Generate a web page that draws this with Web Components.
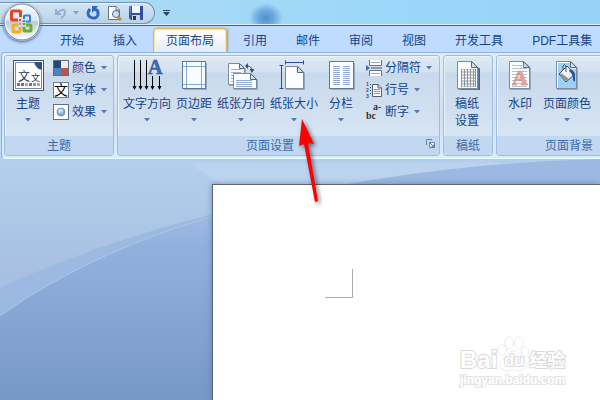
<!DOCTYPE html>
<html lang="zh-CN">
<head>
<meta charset="utf-8">
<title>页面布局</title>
<style>
html,body{margin:0;height:100%}
body{font:12px/16px "Liberation Sans","Noto Sans CJK SC",sans-serif;color:#15428b;overflow:hidden}
</style>
</head>
<body>
<word-window></word-window>
<script>
const PAGE = (x, y, w, h, f) => `<path d="M${x+1} ${y+1}h${w-f}l${f} ${f}v${h-f}h-${w}z" fill="#6d87ad" opacity=".6"/><path d="M${x+.5} ${y+.5}h${w-f-1}l${f} ${f}v${h-f-1}h-${w-1}z" fill="#fcfdff" stroke="#7d8ba1"/><path d="M${x+w-f-.5} ${y+.5}v${f}h${f}z" fill="#d5e1f0" stroke="#52668a"/>`;
const lines = (x1, x2, y1, y2, step, c) => { let d = ''; for (let y = y1; y <= y2; y += step) d += `M${x1} ${y}.5H${x2}`; return `<path d="${d}" stroke="${c}" fill="none"/>`; };
const ICONS = {
  theme: [32, 32, `<rect x="1.500" y=".5" width="30" height="30" fill="#fff" stroke="#3f5475"/><path d="M3.500 2.500h19l7 7v19h-26z" fill="#fff" stroke="#7a8ba6"/><path d="M22 2h8v8q-6-1-8-8" fill="#33507f"/><path d="M22 2q0 7 8 8l-1 1-8-7z" fill="#c9d8ee"/><text x="6" y="21" font-size="12" fill="#17365d">文<tspan x="19" font-size="9">文</tspan></text><path d="M5 23h3v3H5z" fill="#4f81bd"/><path d="M9 23h3v3H9z" fill="#c0504d"/><path d="M13 23h3v3h-3z" fill="#9bbb59"/><path d="M17 23h3v3h-3z" fill="#8064a2"/><path d="M21 23h3v3h-3z" fill="#4bacc6"/><path d="M25 23h3v3h-3z" fill="#f79646"/>`],
  color: [16, 16, `<path d="M0 0h16v16H0z" fill="#5c6c88"/><path d="M1 1h7v7H1z" fill="#1f497d"/><path d="M8 1h7v7H8z" fill="#eeece1"/><path d="M1 8h7v7H1z" fill="#4f81bd"/><path d="M8 8h7v7H8z" fill="#c0504d"/>`],
  font: [16, 16, `<rect x=".5" y=".5" width="15" height="15" fill="#fff" stroke="#6e7d97"/><text x="1" y="13" font-size="14" fill="#000">文</text>`],
  effect: [16, 16, `<defs><radialGradient id="g" cx=".4" cy=".3"><stop stop-color="#e6f2ff"/><stop offset="1" stop-color="#83add8"/></radialGradient></defs><rect x=".5" y=".5" width="15" height="15" fill="#fff" stroke="#5f708e"/><circle cx="8" cy="8" r="4" fill="url(#g)" stroke="#6e96c4"/>`],
  direction: [32, 32, `<path d="M3.500 0v29M9.500 0v29M15.500 0v29M21.500 16v13M28.500 16v13" stroke="#000" fill="none"/><path d="M1.500 26h4l-2 4zM7.500 26h4l-2 4zM13.500 26h4l-2 4zM19.500 26h4l-2 4zM26.500 26h4l-2 4z" fill="#000"/><text x="17" y="14" font-family="Liberation Serif,serif" font-weight="bold" font-size="20" fill="#3d6dbb" stroke="#274f94" stroke-width=".5">A</text>`],
  margins: [32, 32, `<path d="M6 3h23v27H6z" fill="#718bb0" opacity=".6"/><rect x="4.500" y="1.500" width="23" height="27" fill="#f8fbff" stroke="#617896"/><path d="M8.500 2v26M23.500 2v26M5 6.500h22M5 24.500h22" stroke="#7faad8" fill="none"/>`],
  orient: [32, 32, PAGE(3,3,17,22,5)+lines(6,16,9,22,3,'#9ab2d2')+PAGE(8,13,24,16,6)+lines(11,27,20,26,2,'#91acd0')+`<path d="M22 6q5 0 5 5" fill="none" stroke="#33507f"/><path d="M24.500 9h5L27 13zM23 3v6l-3-3z" fill="#33507f"/>`],
  size: [32, 32, `<path d="M7.500 2.500h18M7.500 .5v4M25.500 .5v4M3.500 6v22M1.500 5.500h4M1.500 28.500h4" stroke="#24509c" fill="none"/>`+PAGE(7,6,19,23,6)],
  columns: [32, 32, `<path d="M6 3h24v27H6z" fill="#718bb0" opacity=".6"/><rect x="4.500" y="1.500" width="24" height="27" fill="#fbfdff" stroke="#617896"/>`+lines(8,15,6,24,2,'#8eaad0')+lines(18,25,6,24,2,'#8eaad0')],
  breaks: [16, 16, `<path d="M3.500 0v5.500h12V0M3.500 16v-5.500h12V16" fill="#fff" stroke="#5f6f87"/><path d="M5 2.500h9M5 13.500h9" stroke="#9aaac2"/><path d="M5 8h11" stroke="#3d4e6a"/><path d="M0 5l4 3-4 3z" fill="#3c68b8"/>`],
  numbers: [16, 16, `<text font-family="Liberation Sans,sans-serif" font-size="5" font-weight="bold" fill="#24509c"><tspan x="0" y="4">1</tspan><tspan x="0" y="10">2</tspan><tspan x="0" y="16">3</tspan></text><path d="M4.500 2v12" stroke="#31588f" stroke-dasharray="1 2"/><path d="M6.500 2.500h6l3 3v9h-9z" fill="#fff" stroke="#555f70"/><path d="M12 2v4h4" fill="#ccd7e8" stroke="#555f70"/><path d="M8 7.500h6M8 9.500h6M8 11.500h6" stroke="#7f93b0"/>`],
  hyphen: [16, 16, `<text font-family="Liberation Serif,serif" font-weight="bold" font-size="10" fill="#333"><tspan x="0" y="15">bc</tspan><tspan x="7" y="6">a-</tspan></text>`],
  grid: [32, 32, `<path d="M26 8h3v22H9v-1h17z" fill="#3b67b1"/>`+PAGE(6,1,21,28,6)+`<path d="M10 9h15v18H10z" fill="#8b95a4"/><path d="M11 10.500h13M11 13.500h13M11 16.500h13M11 19.500h13M11 22.500h13M11 25.500h13" stroke="#fff" stroke-width="2" stroke-dasharray="2 1"/>`],
  watermark: [32, 32, PAGE(5,1,21,28,6)+lines(8,23,5,26,3,'#b3c1d5')+`<text x="8" y="25" font-family="Liberation Serif,serif" font-weight="bold" font-size="22" fill="#e8a79c" stroke="#cf8375" stroke-width=".5">A</text>`],
  fill: [32, 32, PAGE(5,1,21,28,6)+`<path d="M7 3h12v6h6v19H7z" fill="#9ed0f6"/><path d="M8 14l8-8 8 8-9 8z" fill="#f2f2f2" stroke="#454b55"/><path d="M9 15l6 6 3-2-8-6z" fill="#8b939c"/><path d="M12 10V6q1-3 3 0v6" fill="none" stroke="#555"/><path d="M19 9q6 1 5 12-1 2-2-1 0-6-4-9z" fill="#2558a5"/>`],
  undo: [14, 16, `<path d="M3 4v5h5M4 8q7-6 8-1 0 4-4 6" fill="none" stroke="#91afd5" stroke-width="2"/>`],
  redo: [14, 16, `<path d="M4 4q-4 5 0 8 6 3 8-2 1-5-4-6" fill="none" stroke="#2c69c2" stroke-width="3"/><path d="M6 1h6l-6 7z" fill="#2c69c2"/>`],
  preview: [16, 16, `<path d="M1.500 1.500h8l3 3v10h-11z" fill="#fff" stroke="#66748b"/><path d="M9 1v4h4" fill="#d8e4f2" stroke="#66748b"/><circle cx="9" cy="9" r="3.500" fill="#c7e4f9" stroke="#53677f"/><path d="M11 12l3 3" stroke="#d58b2b" stroke-width="3"/>`],
  save: [16, 16, `<path d="M1 1h14v14H3l-2-2z" fill="#354b9d"/><path d="M4 1h8v7H4z" fill="#eef6ff"/><path d="M4 10h8v5H4z" fill="#cad2e4"/><path d="M5 11h3v4H5z" fill="#263469"/><path d="M1 1h2v13z" fill="#6c86ce"/>`],
  launcher: [9, 9, `<path d="M.5 6V.5H6" fill="none" stroke="#6084b7"/><path d="M3.500 3.500h5v5h-5z" fill="#fff" stroke="#6084b7"/><path d="M4 4l4 4V5M8 8H5" fill="none" stroke="#49699c"/>`],
  down: [6, 4, `<path d="M0 0h6L3 3.500z" fill="#5779b0"/>`],
  custom: [7, 6, `<path d="M0 .5h7" stroke="#25456f"/><path d="M0 2h7L3.500 6z" fill="#25456f"/>`],
  orb: [38, 38, `<defs><linearGradient id="o" x2="0" y2="1"><stop stop-color="#f9fbfd"/><stop offset=".45" stop-color="#dce5f1"/><stop offset=".5" stop-color="#bccadd"/><stop offset="1" stop-color="#fff"/></linearGradient></defs><circle cx="19" cy="19" r="18" fill="url(#o)" stroke="#70849f"/><circle cx="19" cy="19" r="16.500" fill="none" stroke="#fff" opacity=".8"/><g fill="none"><path d="M15 17H9.500q-1 0-1-1V9q0-1 1-1h7q1 0 1 1v5" stroke="#dd471b" stroke-width="3"/><path d="M21 16v-3q0-.5.500-.5h5q.5 0 .5.500v5q0 .5-.5.500H23" stroke="#3a83ce" stroke-width="2"/><path d="M15 22h-4q-1 0-1 1v5q0 1 1 1h5q1 0 1-1v-4" stroke="#f3b01b" stroke-width="3"/><path d="M23 22h4q1 0 1 1v4q0 1-1 1h-5q-1 0-1-1v-3" stroke="#6cad2e" stroke-width="3"/></g><path d="M16 16h2v2h-2z" fill="#dd471b"/><path d="M20 17h2v2h-2z" fill="#3a83ce"/><path d="M16 20h2v2h-2z" fill="#f3a01b"/><path d="M20 20h2v2h-2z" fill="#6cad2e"/>`]
};
const define = (name, html, setup) => customElements.define(name, class extends HTMLElement {
  constructor() { super(); this.attachShadow({mode: 'open'}); }
  connectedCallback() {
    const t = document.createElement('template');
    t.innerHTML = typeof html === 'function' ? html(this) : html;
    this.shadowRoot.replaceChildren(t.content.cloneNode(true));
    if (setup) setup(this);
  }
});
const RESET = `*{box-sizing:border-box}button{font:inherit;color:inherit;background:none;border:0;padding:0;margin:0}`;

define('rb-icon', el => { const [w, h, body] = ICONS[el.getAttribute('name')];
  return `<style>:host{display:inline-block;flex:none}svg{display:block;overflow:visible;font-family:"Noto Sans CJK SC",sans-serif}</style><svg width="${w}" height="${h}" viewBox="0 0 ${w} ${h}" aria-hidden="true">${body}</svg>`; });

define('rb-large', el => `<style>${RESET}:host{display:block}button{display:flex;flex-direction:column;align-items:center;min-width:40px;padding:4px 2px 0;white-space:nowrap}span{line-height:17px;margin-top:4px}.down{margin-top:5px}</style>
<button type="button"><rb-icon name="${el.getAttribute('icon')}"></rb-icon><span><slot></slot></span>${el.hasAttribute('plain') ? '' : '<rb-icon class="down" name="down"></rb-icon>'}</button>`);

define('rb-small', el => `<style>${RESET}:host{display:block}button{display:flex;align-items:center;height:22px;padding-left:4px;white-space:nowrap}span{margin:0 5px 0 3px}</style>
<button type="button"><rb-icon name="${el.getAttribute('icon')}"></rb-icon><span><slot></slot></span><rb-icon name="down"></rb-icon></button>`);

define('rb-stack', `<style>:host{display:flex;flex-direction:column;padding-top:1px}</style><slot></slot>`);

define('rb-group', el => `<style>${RESET}
:host{display:flex;flex-direction:column;flex:none;border:1px solid #9ebee0;border-radius:3px;box-sizing:border-box;height:101px;box-shadow:inset 1px 1px #eaf3fc;background:linear-gradient(#dee9f5 0,#d3e1f0 16px,#c8d9ec 17px,#dbe8f5 100%)}
.body{flex:1;display:flex;gap:1px;padding:0 3px}
.foot{height:19px;display:flex;align-items:center;background:#c1d8f0;color:#3e6aaa;padding:0 4px}
.foot span{flex:1;text-align:center}.foot button{margin:0 0 4px 8px}</style>
<div class="body"><slot></slot></div><div class="foot"><span>${el.getAttribute('label')}</span>${el.hasAttribute('launcher') ? '<button type="button" aria-label="页面设置选项"><rb-icon name="launcher"></rb-icon></button>' : ''}</div>`);

define('rb-tab', `<style>${RESET}:host{display:block;flex:none}
button{display:block;height:24px;padding:0 12px;border:1px solid transparent;border-bottom:0;border-radius:4px 4px 0 0;white-space:nowrap}
:host([active]) button{border-color:#dcb969;background:linear-gradient(#f9efd0,#fff 4px,#eef3fa 14px,#e3ecf8);box-shadow:inset 1px 1px #ffe6a0,inset -1px 0 #ffe6a0,1px 0 2px #8b9bb0}</style>
<button type="button" role="tab"><slot></slot></button>`, el => el.shadowRoot.querySelector('button').setAttribute('aria-selected', el.hasAttribute('active')));

define('title-bar', `<style>${RESET}
:host{display:flex;align-items:center;height:26px;box-sizing:border-box;border-bottom:1px solid #46647f;box-shadow:inset 0 -1px #dceffa;position:relative;
background:radial-gradient(ellipse 17px 15px at 266px 18px,#4f8fce,#5b9bd5cc 45%,transparent),linear-gradient(90deg,#bad9f0,#a6d9f6 180px,#9bd7f9 400px,#96d3f6)}
.bar{display:flex;align-items:center;height:22px;padding:0 10px 0 53px;border:1px solid #7592b3;border-left:0;border-radius:0 11px 11px 0;background:linear-gradient(#d2e4f4,#b9d2e9);box-shadow:inset 0 1px #eaf4fc}
button{display:flex}.u{margin-right:6px}.d{margin-right:7px;opacity:.6}.r{margin-right:7px}.p{margin-right:5px}.c{margin-left:8px}
.orb{position:absolute;left:3px;top:3px;z-index:2;border-radius:50%;box-shadow:0 1px 3px #42618c}</style>
<button class="orb" type="button" aria-label="Office 按钮"><rb-icon name="orb"></rb-icon></button>
<div class="bar"><button class="u" type="button" aria-label="撤消"><rb-icon name="undo"></rb-icon></button><button class="d" type="button" aria-label="撤消列表"><rb-icon name="down"></rb-icon></button><button class="r" type="button" aria-label="重复"><rb-icon name="redo"></rb-icon></button><button class="p" type="button" aria-label="打印预览"><rb-icon name="preview"></rb-icon></button><button type="button" aria-label="保存"><rb-icon name="save"></rb-icon></button></div>
<button class="c" type="button" aria-label="自定义快速访问工具栏"><rb-icon name="custom"></rb-icon></button>`);

define('tab-row', `<style>:host{display:flex;gap:3px;align-items:flex-end;height:26px;padding-left:47px;background:#bfdbff}</style><slot></slot>`);

define('ribbon-bar', `<style>:host{display:flex;gap:3px;padding:2px 0 2px 2px;margin-left:1px;border:solid #8db2e3;border-width:1px 0 0 1px;border-bottom:1px solid #e0ffff;border-radius:4px 0 0 4px;background:linear-gradient(#e2edf9,#cfe0f3 60px,#dcecfb);box-shadow:0 1px #82a8d0}</style><slot></slot>`);

define('bai-mark', `<style>:host{display:block;width:108px;font-family:"Liberation Sans","Noto Sans CJK SC",sans-serif;font-weight:bold;color:#fff;-webkit-text-stroke:2px #dadada;paint-order:stroke fill}
.top{display:flex;align-items:flex-end;height:36px;font-size:24px;line-height:24px}.paw{position:relative;width:32px;height:36px;flex:none}svg{display:block}
.paw span{position:absolute;left:7px;top:15px;font-size:16px;line-height:20px;color:#fff}.jy{font-size:18px;line-height:22px}.url{font-size:12px;line-height:16px;-webkit-text-stroke:2px #e4e4e4}</style>
<div class="top"><span>Bai</span><div class="paw"><svg width="32" height="36" fill="#fff" stroke="#d8d8d8"><ellipse cx="5" cy="14" rx="4" ry="5"/><ellipse cx="12" cy="7" rx="4" ry="6"/><ellipse cx="22" cy="7" rx="4" ry="6"/><ellipse cx="28" cy="16" rx="3.500" ry="5"/><path d="M16 15q5 0 8 6 6 4 5 9-2 5-8 4-5-1-10 0-7 1-8-5 0-5 6-8 3-6 7-6z"/></svg><span>du</span></div><span class="jy">经验</span></div><div class="url">jingyan.baidu.com</div>`);

define('doc-area', `<style>
:host{display:flex;flex:1;position:relative;overflow:hidden;background:#b3cdea}
.back{position:absolute;inset:0;width:100%;height:100%}
.page{flex:1;margin:25px 0 0 212px;padding:84px 0 0 112px;border:solid #5f646c;border-width:1px 0 0 1px;background:#fff;position:relative;box-shadow:0 0 6px #4b6c9b99}
.corner{width:28px;height:29px;box-sizing:border-box;border:solid #a9abad;border-width:0 1px 1px 0}
bai-mark{position:absolute;right:32px;bottom:12px}</style>
<svg class="back" viewBox="0 0 600 240" preserveAspectRatio="none" aria-hidden="true"><defs><linearGradient id="a" x2="0" y2="1"><stop stop-color="#b4cfec"/><stop offset=".5" stop-color="#a6bfe2"/></linearGradient><linearGradient id="b" gradientUnits="userSpaceOnUse" x1="0" y1="60" x2="0" y2="240"><stop stop-color="#9bb9e3"/><stop offset=".15" stop-color="#92b1dd"/><stop offset="1" stop-color="#7698c9"/></linearGradient></defs>
<path d="M0 0h600v240H0z" fill="url(#a)"/><path d="M190 4H600v60H300L212 20z" fill="#bcd3f0"/><path d="M0 128Q100 83 212 55Q400 5 600 0V240H0z" fill="#9bb9e1"/><path d="M0 156Q90 93 212 57Q400 12 600 5V240H0z" fill="url(#b)"/><path d="M0 156Q90 93 212 57" fill="none" stroke="#aac6e8"/></svg>
<div class="page"><div class="corner"></div><bai-mark></bai-mark></div>`);

define('word-window', `<style>
:host{display:flex;flex-direction:column;min-height:100vh;position:relative;overflow:hidden;background:#bfdbff}
.wide{min-width:146px}.paper{width:50px}.setup{min-width:323px}.theme{width:110px}
.pointer{position:absolute;left:290px;top:110px;filter:drop-shadow(2px 2px 2px #0008)}</style>
<title-bar></title-bar>
<tab-row role="tablist"><rb-tab>开始</rb-tab><rb-tab>插入</rb-tab><rb-tab active>页面布局</rb-tab><rb-tab>引用</rb-tab><rb-tab>邮件</rb-tab><rb-tab>审阅</rb-tab><rb-tab>视图</rb-tab><rb-tab>开发工具</rb-tab><rb-tab>PDF工具集</rb-tab></tab-row>
<ribbon-bar>
<rb-group class="theme" label="主题"><rb-large icon="theme">主题</rb-large><rb-stack><rb-small icon="color">颜色</rb-small><rb-small icon="font">字体</rb-small><rb-small icon="effect">效果</rb-small></rb-stack></rb-group>
<rb-group class="setup" label="页面设置" launcher><rb-large icon="direction">文字方向</rb-large><rb-large icon="margins">页边距</rb-large><rb-large icon="orient">纸张方向</rb-large><rb-large icon="size">纸张大小</rb-large><rb-large icon="columns">分栏</rb-large><rb-stack><rb-small icon="breaks">分隔符</rb-small><rb-small icon="numbers">行号</rb-small><rb-small icon="hyphen">断字</rb-small></rb-stack></rb-group>
<rb-group class="paper" label="稿纸"><rb-large icon="grid" plain>稿纸<br>设置</rb-large></rb-group>
<rb-group class="wide" label="页面背景"><rb-large icon="watermark">水印</rb-large><rb-large icon="fill">页面颜色</rb-large></rb-group>
</ribbon-bar>
<doc-area></doc-area>
<svg class="pointer" width="36" height="96" aria-hidden="true"><path d="M12 9l12 25-6-1 10 58-3 1-11-58-5 2z" fill="#f00"/></svg>`);
</script>
</body>
</html>
